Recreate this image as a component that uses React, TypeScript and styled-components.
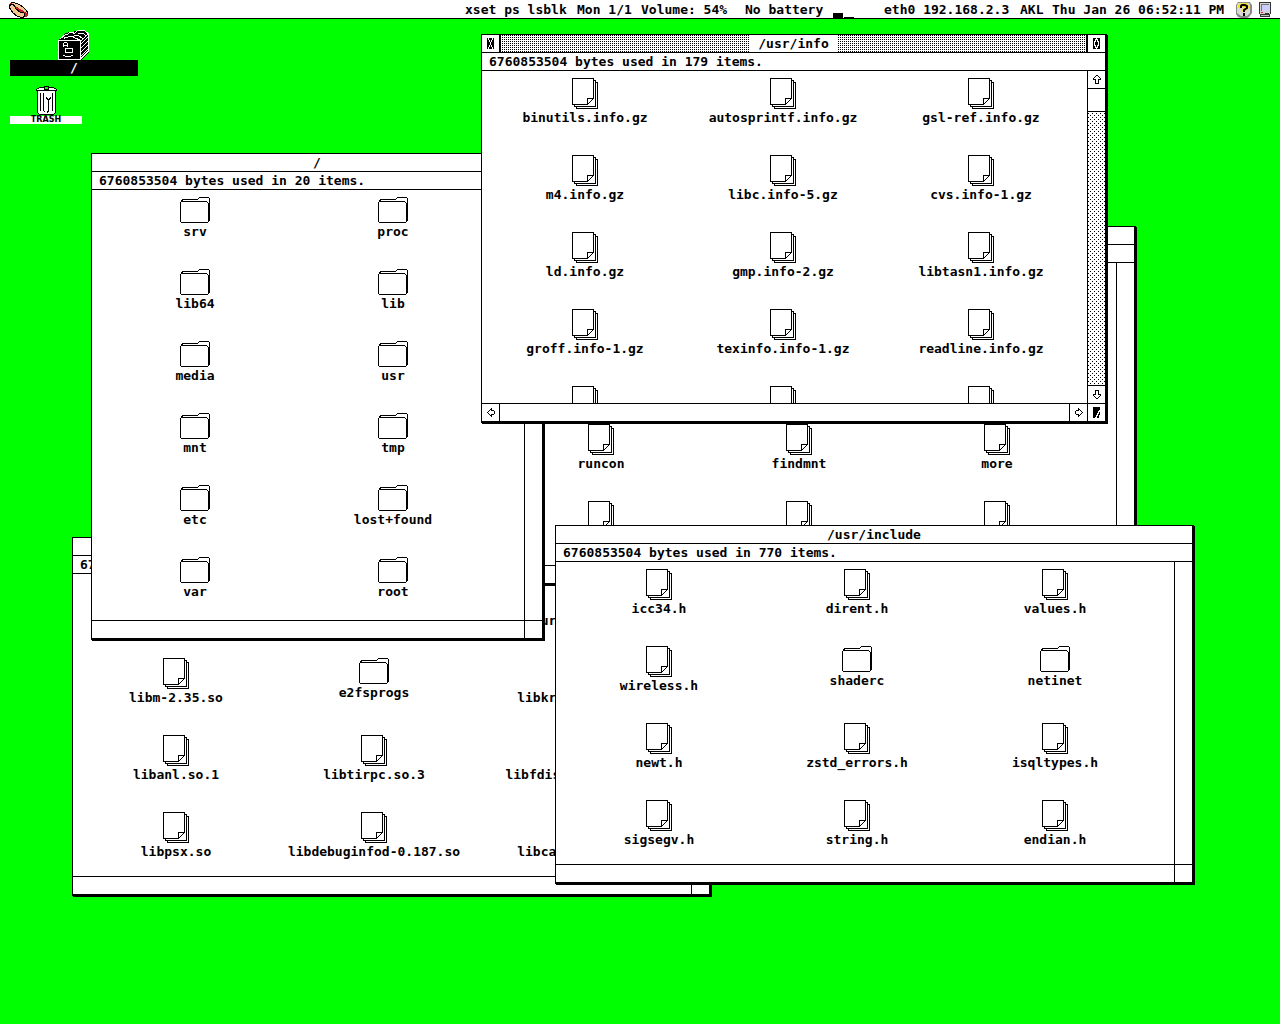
import React from "react";
import styled, { createGlobalStyle, css } from "styled-components";

const ink = "#000";
const paper = "#fff";
const green = "#00ff00";

const Global = createGlobalStyle`
  * { box-sizing: border-box; }
  body {
    margin: 0;
    background: ${green};
    color: ${ink};
    font: bold 13px/16px "DejaVu Sans Mono", "Liberation Mono", monospace;
  }
  button { font: inherit; color: inherit; }
`;

/* ---------- pixel drawings ---------- */

const Svg = styled.svg`
  display: block;
  flex: none;
`;

const Pixels = ({ rows }: { rows: string[] }) => (
  <Svg width={rows[0].length} height={rows.length} shapeRendering="crispEdges" aria-hidden="true">
    {rows.flatMap((row, y) =>
      row.split("").map((c, x) =>
        c === "#" ? <rect key={`${x}-${y}`} x={x} y={y} width="1" height="1" fill={ink} /> : null
      )
    )}
  </Svg>
);

const closer = [
  "#.###.#", "#.###.#", "##.#.##", "##.#.##", "###.###", "###.###",
  "###.###", "##.#.##", "##.#.##", "#.###.#", "#.###.#",
];
const fuller = [
  "###.###", "##...##", "##.#.##", "#..#..#", "#.###.#", "#.###.#",
  "#.###.#", "#..#..#", "##.#.##", "##...##", "###.###",
];
const arrowUp = [
  "...##...", "..#..#..", ".#....#.", "#......#", "###..###",
  "..#..#..", "..#..#..", "..#..#..", "..####..",
];
const arrowDown = [...arrowUp].reverse();
const arrowLeft = [
  "....#...", "...##...", "..#.###.", ".#.....#", "#......#",
  ".#.....#", "..#.###.", "...##...", "....#...",
];
const arrowRight = arrowLeft.map((r) => r.split("").reverse().join(""));
const sizer = [
  "#######", "#######", "#######", "######.", "#####..", "#####.#",
  "####..#", "####.##", "###..#.", "###.##.", "##..##.",
];

const FileIcon = () => (
  <Svg width="26" height="31" shapeRendering="crispEdges" fill={paper} stroke={ink} aria-hidden="true">
    <path d="M4.5 4.5H25.5V30.5H4.5Z" />
    <path d="M2.5 2.5H23.5V28.5H2.5Z" />
    <path d="M.5 .5H21.5V20.5L15.5 26.5H.5Z" />
    <path d="M15.5 26.5V20.5H21.5" fill="none" />
  </Svg>
);

const FolderIcon = () => (
  <Svg width="30" height="26" shapeRendering="crispEdges" fill={paper} stroke={ink} aria-hidden="true">
    <path d="M1.5 4.5L2.5 2.5H17.5L19.5 .5H28.5L29.5 1.5V23.5L28.5 24.5" />
    <path d="M.5 5.5L1.5 4.5H26.5L28.5 6.5V24.5L27.5 25.5H1.5L.5 24.5Z" />
  </Svg>
);

const HotDog = () => (
  <Svg width="19" height="16" shapeRendering="crispEdges" fill="none" strokeLinecap="round" aria-hidden="true">
    <path d="M4 3Q8 4 11 6T16 11" stroke={ink} strokeWidth="6" />
    <path d="M4 3Q8 4 11 6T16 11" stroke="#f2c890" strokeWidth="4" />
    <path d="M2 3Q5 6 9 8T17 13" stroke="#c8202c" strokeWidth="4" />
    <path d="M3 5Q5 9 8 11T13 13" stroke={ink} strokeWidth="6" />
    <path d="M3 5Q5 9 8 11T13 13" stroke="#f2c890" strokeWidth="4" />
  </Svg>
);

const HelpIcon = () => (
  <Svg width="16" height="16" aria-hidden="true">
    <path d="M2 0H14L15 2L16 3V11L13 15L11 16H5L2 15L0 12V3Z" fill="#888" />
    <path d="M2 1H13L14 3V11L11 14H5L1 11V3Z" fill="#d8d8d8" />
    <path d="M4 6V4L6 3H10L11 5L8 8V10" fill="none" stroke="#f4e42c" strokeWidth="4" />
    <path d="M5 6V4L6 3H9L11 4V6L8 8V10" fill="none" stroke="#000" strokeWidth="2" />
    <path d="M7 11H9V14H7Z" fill="#000" />
  </Svg>
);

const ComputerIcon = () => (
  <Svg width="12" height="15" shapeRendering="crispEdges" aria-hidden="true">
    <path d="M0 0H12V12H11V15H1V12H0Z" fill="#333" />
    <path d="M1 1H11V12H1Z" fill="#d4d0d0" />
    <path d="M2 2H10V9H2Z" fill="#777" />
    <path d="M3 3H10V9H3Z" fill="#ccccff" />
    <path d="M2 10H4V11H2Z" fill="#e02020" />
    <path d="M6 11H10V12H6Z" fill="#333" />
    <path d="M2 13H10V14H2Z" fill="#bbb" />
  </Svg>
);

const DriveIcon = () => (
  <Svg width="32" height="30" shapeRendering="crispEdges" aria-hidden="true">
    <path d="M0 10L8 3L12 2H15L20 0H26L31 4V22L23 30H0Z" fill={ink} />
    <g fill="none" stroke={paper}>
      <path d="M.5 10.500H22.500V29.500H.5Z" />
      <path d="M2 9L8 4H10L12 2.500H15L17 4M6 9V7.500H9L11 6.500H14L17 8L22 10M14 7L17 5.500H20L26 9M17 2.500L20 .5H26.500L30.500 4V21L22.500 29M20 3H24L29 6" />
      <path d="M23 14L30 7M23 18L30 11M23 22L30 15M23 26L30 19M23 11L30 4" />
      <path d="M5.500 17V13.500L6.500 12.500H8.500L9.500 13.500V17M5.500 15.500H9.500" />
      <path d="M7.500 18.500H14.500V22.500H7.500Z" />
      <path d="M5 25.500H7M7 26.500H13M13 25.500H15" />
    </g>
  </Svg>
);

const TrashIcon = () => (
  <Svg width="21" height="29" shapeRendering="crispEdges" aria-hidden="true">
    <path d="M1 4H20V26L18 29H3L1 26Z" fill={paper} />
    <g fill="none" stroke={ink}>
      <path d="M3.500 1.500H17.500L20.500 3.500V4.500H.5V3.500Z" fill={paper} />
      <path d="M8.500 3V.5H12.500V3Z" fill={green} />
      <path d="M1.500 5V26.500L3.500 28.500H17.500L19.500 26.500V5" />
      <path d="M4.500 7V24L5.500 25.500M7.500 7V24L8.500 26M16.500 7V24L15.500 25.500M10.500 11V12L12.500 14L14.500 12V11M12.500 14V25L11 26.500" />
    </g>
  </Svg>
);

/* ---------- desktop and menu bar ---------- */

const Desktop = styled.main`
  position: relative;
  min-height: 100vh;
  overflow: hidden;
`;

const MenuBar = styled.header`
  display: flex;
  justify-content: flex-end;
  height: 19px;
  padding: 0 9px;
  background: ${paper};
  border-bottom: 1px solid ${ink};
`;

const Brand = styled.div`
  margin-right: auto;
  padding-top: 2px;
`;

const Status = styled.span<{ $chars: number; $after?: number }>`
  width: ${(p) => p.$chars * 8}px;
  margin-right: ${(p) => p.$after ?? 8}px;
  padding-top: 2px;
  white-space: pre;
`;

const Meter = styled.div`
  display: flex;
  align-items: flex-end;
  gap: 1px;
  margin-right: 30px;
`;

const Bar = styled.i<{ $level: number }>`
  width: 10px;
  height: ${(p) => p.$level}px;
  background: ${ink};
`;

const Tray = styled.div`
  display: flex;
  gap: 7px;
  padding-top: 2px;
`;

const Shortcuts = styled.nav`
  display: flex;
  flex-direction: column;
  align-items: flex-start;
  gap: 10px;
  padding: 11px 10px;
`;

const Shortcut = styled.button`
  display: flex;
  flex-direction: column;
  align-items: center;
  padding: 0;
  border: 0;
  background: none;
`;

const ShortcutLabel = styled.span<{ $selected?: boolean }>`
  ${(p) =>
    p.$selected
      ? css`
          width: 128px;
          background: ${ink};
          color: ${paper};
        `
      : css`
          width: 72px;
          margin-top: 1px;
          background: ${paper};
          font: bold 8px/8px "DejaVu Sans", sans-serif;
        `}
`;

/* ---------- windows ---------- */

const Frame = styled.section<{ $x: number; $y: number; $w: number; $h: number }>`
  position: absolute;
  left: ${(p) => p.$x}px;
  top: ${(p) => p.$y}px;
  width: ${(p) => p.$w}px;
  height: ${(p) => p.$h}px;
  display: flex;
  flex-direction: column;
  background: ${paper};
  border: solid ${ink};
  border-width: 1px 2px 2px 1px;
  box-shadow: 1px 1px ${ink};
`;

const TitleBar = styled.div`
  display: flex;
  flex: none;
  height: 18px;
  border-bottom: 1px solid ${ink};
`;

const TitleTrack = styled.div<{ $active?: boolean }>`
  flex: 1;
  display: flex;
  justify-content: center;
  ${(p) =>
    p.$active &&
    css`
      border: solid ${ink};
      border-width: 0 1px 0 2px;
      background: conic-gradient(${ink} 25%, ${paper} 0) 0 0 / 2px 2px;
    `}
`;

const Title = styled.h2`
  margin: 0;
  padding: 1px 8px 0;
  background: ${paper};
  font: inherit;
`;

const Info = styled.p`
  flex: none;
  height: 18px;
  margin: 0;
  padding: 1px 7px 0;
  border-bottom: 1px solid ${ink};
  white-space: nowrap;
`;

const Row = styled.div<{ $grow?: boolean }>`
  display: flex;
  flex: ${(p) => (p.$grow ? "1" : "none")};
  min-height: 0;
`;

const Files = styled.ul`
  flex: 1;
  display: grid;
  grid-template-columns: repeat(auto-fill, 198px);
  align-content: start;
  row-gap: 29px;
  margin: 0;
  padding: 7px 4px 0;
  overflow: hidden;
  list-style: none;
`;

const Item = styled.button`
  display: flex;
  flex-direction: column;
  align-items: center;
  gap: 1px;
  width: 100%;
  padding: 0;
  border: 0;
  background: none;
  white-space: nowrap;
`;

const VScroll = styled.div`
  display: flex;
  flex-direction: column;
  flex: none;
  width: 18px;
  border-left: 1px solid ${ink};
`;

const HScroll = styled.div`
  display: flex;
  flex: 1;
  height: 18px;
  border-top: 1px solid ${ink};
`;

const Corner = styled.div`
  flex: none;
  width: 18px;
  height: 18px;
  border: solid ${ink};
  border-width: 1px 0 0 1px;
`;

type Edge = "top" | "right" | "bottom" | "left";

const Gadget = styled.button<{ $edge?: Edge }>`
  display: grid;
  place-items: center;
  flex: none;
  width: 17px;
  height: 17px;
  padding: 0;
  border: 0;
  background: ${paper};
  ${(p) =>
    p.$edge &&
    css`
      box-sizing: content-box;
      border-${p.$edge}: 1px solid ${ink};
    `}
`;

const VTrack = styled.div`
  flex: 1;
  background-color: ${paper};
  background-image: conic-gradient(at 1px 1px, transparent 75%, ${ink} 0),
    conic-gradient(at 1px 1px, transparent 75%, ${ink} 0);
  background-size: 4px 4px;
  background-position: 0 0, 2px 2px;
`;

const VThumb = styled.div`
  height: 23px;
  background: ${paper};
  border-bottom: 1px solid ${ink};
`;

interface WinProps {
  title: string;
  items: number;
  entries: string[];
  x: number;
  y: number;
  w: number;
  h: number;
  active?: boolean;
}

/* Names with a trailing slash are folders. */
const Win = ({ title, items, entries, x, y, w, h, active }: WinProps) => (
  <Frame $x={x} $y={y} $w={w} $h={h} aria-label={title}>
    <TitleBar>
      {active && <Gadget aria-label="Close"><Pixels rows={closer} /></Gadget>}
      <TitleTrack $active={active}><Title>{title}</Title></TitleTrack>
      {active && <Gadget $edge="left" aria-label="Full size"><Pixels rows={fuller} /></Gadget>}
    </TitleBar>
    <Info>6760853504 bytes used in {items} items.</Info>
    <Row $grow>
      <Files>
        {entries.map((e) => (
          <li key={e}>
            <Item>
              {e.endsWith("/") ? <FolderIcon /> : <FileIcon />}
              <span>{e.replace("/", "")}</span>
            </Item>
          </li>
        ))}
      </Files>
      <VScroll>
        {active && (
          <>
            <Gadget $edge="bottom" aria-label="Scroll up"><Pixels rows={arrowUp} /></Gadget>
            <VTrack><VThumb /></VTrack>
            <Gadget $edge="top" aria-label="Scroll down"><Pixels rows={arrowDown} /></Gadget>
          </>
        )}
      </VScroll>
    </Row>
    <Row>
      <HScroll>
        {active && (
          <>
            <Gadget $edge="right" aria-label="Scroll left"><Pixels rows={arrowLeft} /></Gadget>
            <Row $grow />
            <Gadget $edge="left" aria-label="Scroll right"><Pixels rows={arrowRight} /></Gadget>
          </>
        )}
      </HScroll>
      <Corner>
        {active && <Gadget aria-label="Resize"><Pixels rows={sizer} /></Gadget>}
      </Corner>
    </Row>
  </Frame>
);

/* Back to front. */
const windows: WinProps[] = [
  {
    title: "/usr/lib", items: 912, x: 72, y: 537, w: 639, h: 359,
    entries: [
      "libz.so", "libacl.so", "liburcu.so.8.0",
      "libm-2.35.so", "e2fsprogs/", "libkrb5.so.3.3",
      "libanl.so.1", "libtirpc.so.3", "libfdisk.so.1.1.0",
      "libpsx.so", "libdebuginfod-0.187.so", "libcap.so.2.66",
    ],
  },
  {
    title: "/usr/bin", items: 1846, x: 497, y: 226, w: 639, h: 359,
    entries: [
      "ls", "cat", "sed", "awk", "grep", "sort",
      "runcon", "findmnt", "more", "tail", "head", "wc",
    ],
  },
  {
    title: "/", items: 20, x: 91, y: 153, w: 453, h: 487,
    entries: [
      "srv/", "proc/", "lib64/", "lib/", "media/", "usr/",
      "mnt/", "tmp/", "etc/", "lost+found/", "var/", "root/",
    ],
  },
  {
    title: "/usr/include", items: 770, x: 555, y: 525, w: 639, h: 359,
    entries: [
      "icc34.h", "dirent.h", "values.h",
      "wireless.h", "shaderc/", "netinet/",
      "newt.h", "zstd_errors.h", "isqltypes.h",
      "sigsegv.h", "string.h", "endian.h",
    ],
  },
  {
    title: "/usr/info", items: 179, x: 481, y: 34, w: 626, h: 389, active: true,
    entries: [
      "binutils.info.gz", "autosprintf.info.gz", "gsl-ref.info.gz",
      "m4.info.gz", "libc.info-5.gz", "cvs.info-1.gz",
      "ld.info.gz", "gmp.info-2.gz", "libtasn1.info.gz",
      "groff.info-1.gz", "texinfo.info-1.gz", "readline.info.gz",
      "sed.info.gz", "bc.info.gz", "tar.info.gz",
    ],
  },
];

export default function App() {
  return (
    <Desktop>
      <Global />
      <MenuBar>
        <Brand><HotDog /></Brand>
        <Status $chars={13}>xset ps lsblk</Status>
        <Status $chars={7}>Mon 1/1</Status>
        <Status $chars={11} $after={16}>Volume: 54%</Status>
        <Status $chars={10}>No battery</Status>
        <Meter><Bar $level={5} /><Bar $level={1} /></Meter>
        <Status $chars={16}>eth0 192.168.2.3</Status>
        <Status $chars={3}>AKL</Status>
        <Status $chars={22}>Thu Jan 26 06:52:11 PM</Status>
        <Tray><HelpIcon /><ComputerIcon /></Tray>
      </MenuBar>
      <Shortcuts>
        <Shortcut>
          <DriveIcon />
          <ShortcutLabel $selected>/</ShortcutLabel>
        </Shortcut>
        <Shortcut>
          <TrashIcon />
          <ShortcutLabel>TRASH</ShortcutLabel>
        </Shortcut>
      </Shortcuts>
      {windows.map((w) => (
        <Win key={w.title} {...w} />
      ))}
    </Desktop>
  );
}
